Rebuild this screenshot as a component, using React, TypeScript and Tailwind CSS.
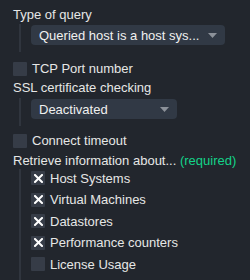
import React from 'react';

function Caret() {
    return (
        <svg width="9" height="5" viewBox="0 0 9 5" className="shrink-0">
            <path d="M0 0 H9 L4.5 5 Z" fill="#8c9199" />
        </svg>
    );
}

function Select({ label, width }: { label: string; width: string }) {
    return (
        <div className={`flex h-[20px] items-center justify-between rounded-[4px] bg-[#313945] pl-[8px] pr-[8px] text-[#f0f0f0] ${width}`}>
            <span className="whitespace-nowrap">{label}</span>
            <Caret />
        </div>
    );
}

function Box({ checked }: { checked?: boolean }) {
    return (
        <div className="flex h-[14px] w-[14px] shrink-0 items-center justify-center rounded-[1px] bg-[#363c47]">
            {checked && (
                <svg width="9" height="9" viewBox="0 0 9 9">
                    <path d="M1 1 L8 8 M8 1 L1 8" stroke="#ffffff" strokeWidth="2" strokeLinecap="square" />
                </svg>
            )}
        </div>
    );
}

function Check({ label, checked }: { label: string; checked?: boolean }) {
    return (
        <div className="flex h-[14px] items-center gap-[5px]">
            <Box checked={checked} />
            <span className="whitespace-nowrap">{label}</span>
        </div>
    );
}

export default function App() {
    const items = [
        { label: 'Host Systems', checked: true },
        { label: 'Virtual Machines', checked: true },
        { label: 'Datastores', checked: true },
        { label: 'Performance counters', checked: true },
        { label: 'License Usage', checked: false },
    ];

    return (
        <div
            className="h-[280px] w-[250px] overflow-hidden bg-[#22262d] pl-[13px] pt-[7px] text-[13px] leading-[15px] text-[#e6e6e6]"
            style={{ fontFamily: '"Liberation Sans", Arial, sans-serif' }}
        >
            <div>Type of query</div>
            <div className="ml-[6px] mt-[2px] border-l-2 border-[#30353e] pb-[7px] pl-[10px] pt-[1px]">
                <Select label="Queried host is a host sys..." width="w-[194px]" />
            </div>

            <div className="mt-[9px] flex h-[15px] items-center gap-[5px]">
                <Box />
                <span>TCP Port number</span>
            </div>

            <div className="mt-[4px]">SSL certificate checking</div>
            <div className="ml-[6px] mt-[3px] border-l-2 border-[#30353e] pb-[7px] pl-[10px] pt-[1px]">
                <Select label="Deactivated" width="w-[146px]" />
            </div>

            <div className="mt-[7px] flex h-[15px] items-center gap-[5px]">
                <Box />
                <span>Connect timeout</span>
            </div>

            <div className="mt-[5px] whitespace-nowrap">
                Retrieve information about... <span className="text-[#13d389]">(required)</span>
            </div>
            <div className="ml-[6px] mt-[1px] flex flex-col gap-[7.5px] border-l-2 border-[#30353e] pb-[20px] pl-[10px] pt-[2px]">
                {items.map((it) => (
                    <Check key={it.label} label={it.label} checked={it.checked} />
                ))}
            </div>
        </div>
    );
}
